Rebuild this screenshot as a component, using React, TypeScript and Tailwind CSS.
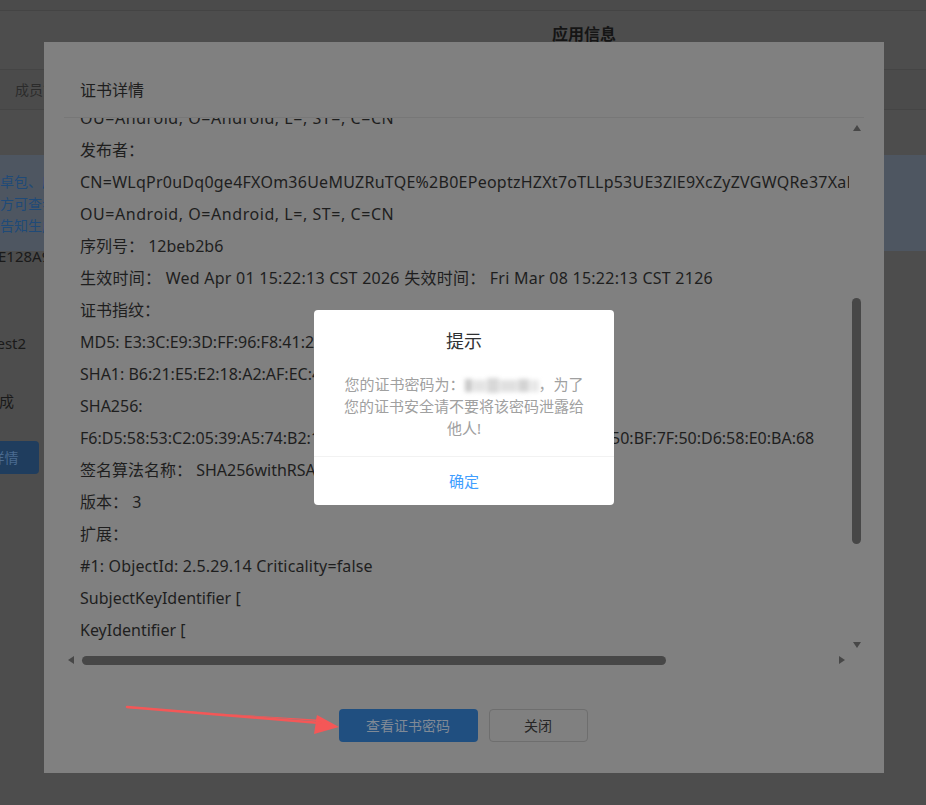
import React from "react";

type Line = { text: string; track?: string };

const certLines: Line[] = [
  { text: "OU=Android, O=Android, L=, ST=, C=CN", track: "tracking-[0.55px]" },
  { text: "发布者：" },
  { text: "CN=WLqPr0uDq0ge4FXOm36UeMUZRuTQE%2B0EPeoptzHZXt7oTLLp53UE3ZlE9XcZyZVGWQRe37XaB4kq", track: "tracking-[0.25px]" },
  { text: "OU=Android, O=Android, L=, ST=, C=CN", track: "tracking-[0.55px]" },
  { text: "序列号： 12beb2b6" },
  { text: "生效时间： Wed Apr 01 15:22:13 CST 2026 失效时间： Fri Mar 08 15:22:13 CST 2126", track: "tracking-[0.25px]" },
  { text: "证书指纹：" },
  { text: "MD5: E3:3C:E9:3D:FF:96:F8:41:2A:7B:C5:19:0D:E4:86:5F" },
  { text: "SHA1: B6:21:E5:E2:18:A2:AF:EC:4D:90:3B:77:C1:08:5E:A6:2F:D3:94:11" },
  { text: "SHA256:" },
  { text: "F6:D5:58:53:C2:05:39:A5:74:B2:1E:4A:9C:07:33:D2:8B:61:F0:2C:A7:95:3E:50:BF:7F:50:D6:58:E0:BA:68" },
  { text: "签名算法名称： SHA256withRSA" },
  { text: "版本： 3" },
  { text: "扩展：" },
  { text: "#1: ObjectId: 2.5.29.14 Criticality=false", track: "tracking-[0.15px]" },
  { text: "SubjectKeyIdentifier [" },
  { text: "KeyIdentifier [" },
  { text: "0000: 3C 8A 51 0E 7D 22 F4 A9" },
];

function Tri({ dir }: { dir: "up" | "down" | "left" | "right" }) {
  const pts = {
    up: "0,6 4,0 8,6",
    down: "0,0 8,0 4,6",
    left: "6,0 6,8 0,4",
    right: "0,0 6,4 0,8",
  }[dir];
  const vertical = dir === "up" || dir === "down";
  return (
    <svg viewBox={vertical ? "0 0 8 6" : "0 0 6 8"} className={vertical ? "h-[6px] w-[8px]" : "h-[8px] w-[6px]"}>
      <polygon points={pts} fill="#474747" />
    </svg>
  );
}

function BackgroundPage() {
  return (
    <div className="flex h-full flex-col text-[#1a1a1a]">
      <div className="h-[11px] border-b border-[#444444] bg-[#4b4b4b]" />
      <div className="flex h-[58px] items-start justify-center pl-[242px] pt-[12px] text-[16px] font-bold leading-[22px] text-[#151515]">
        应用信息
      </div>
      <div className="flex h-[41px] items-center border-y border-[#454545] bg-[#4b4b4b] pl-[15px] text-[14px] text-[#2b2b2b]">
        成员管理
      </div>
      <div className="h-[45px]" />
      <div className="flex h-[96px] flex-col justify-center gap-[1px] bg-[#4e5661] text-[14px] leading-[21px] text-[#1f4a78]">
        <span>卓包、应用</span>
        <span>方可查看</span>
        <span>告知生成</span>
      </div>
      <div className="-ml-[2px] mt-[-5px] text-[15px] leading-[20px]">E128A9C0</div>
      <div className="-ml-[9px] mt-[67px] text-[15px] leading-[20px]">test2</div>
      <div className="-ml-[16px] mt-[38px] text-[15px] leading-[20px]">完成</div>
      <div className="-ml-[30px] mt-[30px] flex h-[33px] w-[69px] items-center justify-center rounded-[4px] bg-[#1f3d5e] text-[14px] text-[#4a6b90]">
        详情
      </div>
    </div>
  );
}

function CertDialog() {
  return (
    <div className="absolute left-[44px] top-[42px] flex h-[731px] w-[840px] flex-col bg-[#808080] text-[#1e1e1e]">
      <div className="px-[36px] pt-[37px] text-[16px] leading-[22px]">证书详情</div>
      <div className="mx-[20px] mt-[16px] grid h-[553px] grid-cols-[1fr_15px] grid-rows-[1fr_22px] border-t border-[#777777]">
        <div className="overflow-hidden pl-[16px]">
          <div className="-mt-[16px] text-[16px] leading-[32px] whitespace-nowrap">
            {certLines.map((line, i) => (
              <div key={i} className={line.track}>
                {line.text}
              </div>
            ))}
          </div>
        </div>
        <div className="flex flex-col items-center">
          <div className="mt-[7px]">
            <Tri dir="up" />
          </div>
          <div className="mt-[167px] h-[246px] w-[9px] rounded-full bg-[#474747]" />
          <div className="flex-1" />
          <Tri dir="down" />
        </div>
        <div className="flex items-center pt-[2px]">
          <div className="ml-[4px]">
            <Tri dir="left" />
          </div>
          <div className="ml-[8px] h-[9px] w-[584px] rounded-full bg-[#474747]" />
          <div className="flex-1" />
          <div className="mr-[4px]">
            <Tri dir="right" />
          </div>
        </div>
        <div />
      </div>
      <div className="mt-[39px] flex justify-center gap-[11px] pr-[2px] text-[14px]">
        <button className="h-[33px] w-[139px] rounded-[4px] bg-[#204f80] text-[#808a96]">查看证书密码</button>
        <button className="h-[33px] w-[99px] rounded-[4px] border border-[#6e6e6e] text-[#262626]">关闭</button>
      </div>
    </div>
  );
}

function PasswordAlert() {
  return (
    <div className="absolute left-[314px] top-[310px] flex h-[195px] w-[300px] flex-col rounded-[4px] bg-white">
      <div className="pt-[19px] text-center text-[18px] leading-[24px] text-[#303133]">提示</div>
      <div className="mt-[20px] px-[27px] text-center text-[15px] leading-[22px] text-[#a0a0a0]">
        您的证书密码为：
        <span className="inline-flex h-[15px] w-[74px] translate-y-[2px] items-center gap-[1px] blur-[2px]">
          <span className="h-[13px] w-[8px] bg-[#c8c8c8]" />
          <span className="h-[12px] w-[13px] bg-[#e4e4e4]" />
          <span className="h-[15px] w-[12px] bg-[#d8d8d8]" />
          <span className="h-[12px] w-[17px] bg-[#e0e0e0]" />
          <span className="h-[13px] w-[11px] bg-[#d4d4d4]" />
          <span className="h-[12px] w-[9px] bg-[#e8e8e8]" />
        </span>
        ，为了您的证书安全请不要将该密码泄露给他人!
      </div>
      <div className="mt-[17px] border-t border-[#f2f2f2]" />
      <div className="flex flex-1 items-center justify-center text-[15px] text-[#409eff]">确定</div>
    </div>
  );
}

export default function App() {
  return (
    <div className="relative h-[805px] w-[926px] overflow-hidden bg-[#4d4d4d] font-['Noto_Sans','Noto_Sans_CJK_SC',sans-serif]">
      <BackgroundPage />
      <CertDialog />
      <PasswordAlert />
      {/* red pointer arrow */}
      <svg className="absolute left-0 top-0 h-[805px] w-[926px]" viewBox="0 0 926 805">
        <polygon points="127,706.5 316,721 314,734 339,727 317,715 316,719.5 127,708" fill="#f45757" />
        <line x1="127" y1="707" x2="320" y2="723" stroke="#f45757" strokeWidth="2.5" strokeLinecap="round" />
      </svg>
    </div>
  );
}
